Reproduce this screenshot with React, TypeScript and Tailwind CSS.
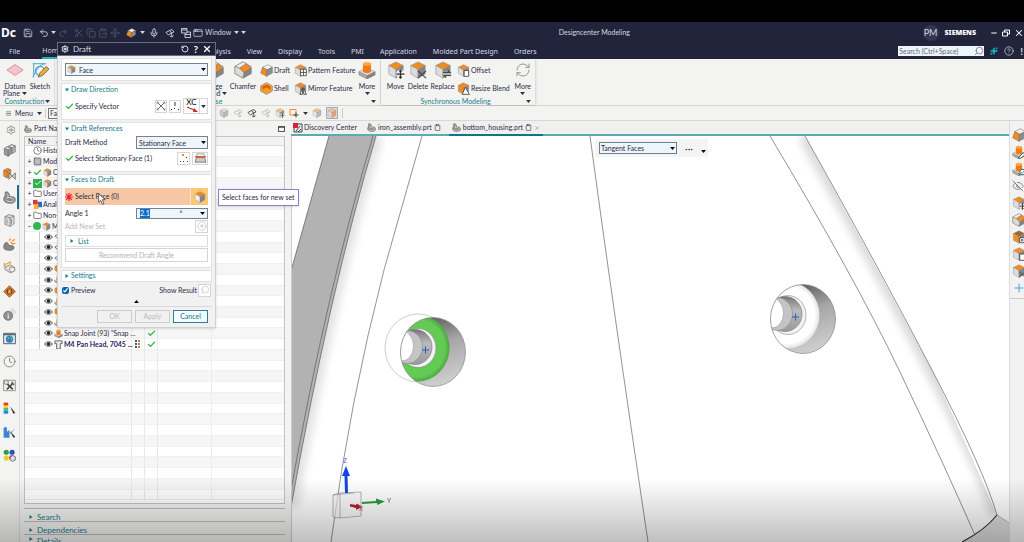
import React from "react";
import {
  Settings, Save, Undo2, Redo2, Scissors, Copy, ClipboardPaste, Move, Mic, AppWindow,
  Clock, Search, Minus, X, CircleHelp, Sparkles, EyeOff, Folder, Check,
  RotateCcw, Plus, RefreshCw, Square, Clipboard, CirclePlus,
} from "lucide-react";

type P = { className?: string };
type CubeProps = P & { top?: string; left?: string; right?: string; badge?: string };

const OR = "#f58a1f";
const GL = "#dcdcdc";
const GD = "#858585";

function Badge({ kind }: { kind?: string }) {
  if (!kind) return null;
  return (
    <g stroke="#444" strokeWidth="1.3" fill="none">
      {kind === "move" && <><circle cx="15" cy="14.500" r="5" fill="#fff" fillOpacity=".8" stroke="none" /><path d="M15 10v9M10.500 14.500h9M13.500 11.500l1.500-1.500 1.500 1.500M13.500 17.500l1.500 1.500 1.500-1.500" stroke="#333" /></>}
      {kind === "delete" && <path d="M10 11l9 8M19 11l-9 8" />}
      {kind === "replace" && <><path d="M10 12h9v5h-9z" fill="#ddd" stroke="none" /><path d="M10 13h8l-2.500-2.500M19 16h-8l2.500 2.500" /></>}
      {kind === "page" && <path d="M11 10h7v9h-7z" fill="#fff" />}
      {kind === "grid" && <path d="M10 8h9v10h-9zM14.500 8v10M10 13h9" fill="#fff" />}
      {kind === "mirror" && <path d="M9 19l4-10v10zM15 19v-10l4 10z" fill="#fff" />}
      {kind === "blend" && <path d="M8 19l5-11 6 11z" fill="#fff" />}
      {kind === "gear" && <><circle cx="14.500" cy="14.500" r="4" fill="#fff" /><circle cx="14.500" cy="14.500" r="1.300" /></>}
      {kind === "tick" && <><circle cx="15" cy="14.500" r="4" fill="#fff" /><path d="M13 14.500l1.500 2 3-4" stroke="#2a9" /></>}
      {kind === "pen" && <path d="M9 18l7-7 3 3-7 5z" fill="#fff" />}
    </g>
  );
}

function Cube({ className, top = OR, left = GL, right = GD, badge }: CubeProps) {
  return (
    <svg viewBox="0 0 20 20" className={className} aria-hidden="true">
      <g stroke="#888" strokeWidth=".6" strokeLinejoin="round">
        <path d="M10 1l8 4-8 4.500L2 5z" fill={top} />
        <path d="M2 5l8 4.500V19l-8-4.500z" fill={left} />
        <path d="M18 5l-8 4.500V19l8-4.500z" fill={right} />
      </g>
      <Badge kind={badge} />
    </svg>
  );
}

function ChamferIcon({ className }: P) {
  return (
    <svg viewBox="0 0 20 20" className={className} aria-hidden="true">
      <g stroke="#777" strokeWidth=".6" strokeLinejoin="round">
        <path d="M1 6l9-5 9 5v8l-9 5-9-5z" fill="#c9c9c9" />
        <path d="M1 6l9-5 4 2-8 5z" fill="#eee" />
        <path d="M6 8l8-5 5 5-8 5z" fill={OR} />
        <path d="M11 13l8-5v6l-9 5z" fill={GD} />
        <path d="M6 8l5 5-1 6-9-5V6z" fill="#dadada" />
      </g>
    </svg>
  );
}

function DraftIcon({ className }: P) {
  return (
    <svg viewBox="0 0 20 20" className={className} aria-hidden="true">
      <g stroke="#666" strokeWidth=".7" strokeLinejoin="round">
        <path d="M4 5l8-4 7 4-8 4z" fill="#f1f1f1" />
        <path d="M4 5l7 4-1 10-9-5z" fill={OR} />
        <path d="M19 5l-8 4-1 10 9-5z" fill="#8d8d8d" />
      </g>
    </svg>
  );
}

function ShellIcon({ className }: P) {
  return (
    <svg viewBox="0 0 20 20" className={className} aria-hidden="true">
      <path d="M1 6l9-5 9 5v8l-9 5-9-5z" fill="#f9a13a" stroke="#7a5a3a" strokeWidth=".8" />
      <path d="M4 7l6-3 6 3v5l-6 3-6-3z" fill="#c9650a" />
      <path d="M4 12l6-4 6 4-6 3z" fill="#ff9a2e" />
    </svg>
  );
}

function ExtrudeIcon({ className, badge }: P & { badge?: string }) {
  return (
    <svg viewBox="0 0 20 20" className={className} aria-hidden="true">
      <g stroke="#777" strokeWidth=".5" strokeLinejoin="round">
        <path d="M1 12l9-4.500 9 4.500-9 4.500z" fill="#ddd" />
        <path d="M1 12l9 4.500V20l-9-4.500z" fill="#aaa" />
        <path d="M19 12l-9 4.500V20l9-4.500z" fill="#808080" />
      </g>
      <path d="M5.500 3v8.500c0 2.700 9 2.700 9 0V3z" fill="#ee7c12" />
      <ellipse cx="10" cy="3.200" rx="4.500" ry="2.200" fill="#ffa64a" />
      <Badge kind={badge} />
    </svg>
  );
}

function PartIcon({ className }: P) {
  return (
    <svg viewBox="0 0 20 20" className={className} aria-hidden="true">
      <path d="M3 2c3-2 6 0 7 4l1 3c4-1 8 0 8 4 0 5-4 6-8 6-6 0-10-3-10-6 0-4 4-6 2-11z" fill="#8b8b8b" stroke="#555" strokeWidth=".8" />
      <path d="M5 11c3-2 9-1 12 2M4 14c3 3 9 3 13 1M6 4c2 2 2 4 1 6" fill="none" stroke="#e9e9e9" strokeWidth="1.200" />
    </svg>
  );
}

function EyeIcon() {
  return (
    <svg viewBox="0 0 18 12" className="h-[6px] w-[9px] shrink-0" aria-hidden="true">
      <path d="M1 6c4-6 12-6 16 0-4 6-12 6-16 0z" fill="#ddd" stroke="#333" strokeWidth="1.500" />
      <circle cx="9" cy="6" r="3.500" fill="#222" />
    </svg>
  );
}

function Caret({ className = "" }: P) {
  return (
    <svg viewBox="0 0 8 5" className={"h-[3px] w-[5px] shrink-0 " + className} aria-hidden="true">
      <path d="M0 0h8L4 5z" fill="currentColor" />
    </svg>
  );
}

function Tri({ open }: { open?: boolean }) {
  return (
    <svg viewBox="0 0 8 8" className="size-1 shrink-0" aria-hidden="true">
      <path d={open ? "M0 1h8L4 7z" : "M1 0v8l6-4z"} fill="#157a8c" />
    </svg>
  );
}

function GreenCheck({ className = "size-[9px]" }: P) {
  return <Check className={className + " shrink-0 text-[#2fb84a]"} strokeWidth={3.5} />;
}

function Csys({ className }: P) {
  return (
    <svg viewBox="0 0 20 20" className={className} aria-hidden="true" fill="none" stroke="currentColor" strokeWidth="1.800">
      <path d="M2 9l7-4 4 5-6 4zM9 5l5-2 4 5-5 2M13 10l1 7M10 16l4 2 3-3" />
    </svg>
  );
}

function TitleBar() {
  const ic = "size-2.5 shrink-0";
  return (
    <div className="flex h-[21px] shrink-0 items-center pl-px text-[#d8d9e2]">
      <strong className="w-[22px] font-['Noto_Sans',sans-serif] text-[12px] leading-3 text-white">Dc</strong>
      <div className="flex items-center gap-0.5">
        <button aria-label="Save"><Save className={ic} strokeWidth={1.7} /></button>
        <button aria-label="Undo" className="ml-1 flex items-center gap-0.5"><Undo2 className={ic} /><Caret /></button>
        <div className="flex items-center gap-0.5 text-[#50546c]">
          <button aria-label="Redo"><Redo2 className={ic} /></button>
          <button aria-label="Cut" className="ml-1"><Scissors className={ic} /></button>
          <button aria-label="Copy"><Copy className={ic} /></button>
          <button aria-label="Paste"><ClipboardPaste className={ic} /></button>
          <button aria-label="Transform"><Move className={ic} /></button>
        </div>
        <button aria-label="Shading" className="ml-1 flex items-center gap-1"><DraftIcon className={ic} /><Caret /></button>
        <button aria-label="Voice" className="ml-0.5"><Mic className={ic} /></button>
        <button aria-label="Touch" className="ml-1"><Csys className={ic} /></button>
        <button aria-label="Switch window" className="ml-1">
          <svg viewBox="0 0 20 20" className={ic} fill="none" stroke="currentColor" strokeWidth="1.800"><path d="M1 1h11v9H1zM1 4h11M8 10v9h11V8h-7M8 13h11" /></svg>
        </button>
        <button className="flex items-center gap-0.5"><AppWindow className={ic} strokeWidth={1.7} />Window<Caret className="ml-px" /></button>
        <button aria-label="Customize"><Caret /></button>
      </div>
      <div className="flex-1 pl-5 text-center">Designcenter Modeling</div>
      <span className="mr-1.5 flex size-4 items-center justify-center rounded-full bg-[#34374f] text-[9px] leading-3">PM</span>
      <strong className="font-['Noto_Sans',sans-serif] text-[7px] font-black leading-3 text-white">SIEMENS</strong>
      <div className="ml-3.5 flex items-center gap-1 text-white">
        <button aria-label="Minimize"><Minus className="size-2" strokeWidth={3} /></button>
        <button aria-label="Restore">
          <svg viewBox="0 0 16 16" className="size-2" fill="none" stroke="currentColor" strokeWidth="2"><path d="M1 6h10v8H1zM5 6V2h10v8h-4" /></svg>
        </button>
        <button aria-label="Close"><X className="size-2.5" strokeWidth={2.5} /></button>
      </div>
    </div>
  );
}

function MenuTabs() {
  return (
    <div className="flex h-4 shrink-0 items-stretch text-[#d8d9e2]">
      <nav className="flex flex-1 items-stretch gap-4 pl-[9px] font-['Noto_Sans',sans-serif]">
        <a href="#file" className="mr-1.5 flex items-center">File</a>
        <a href="#home" className="flex items-center border-b-2 border-[#18b8b8]">Home</a>
        <a href="#analysis" className="ml-[126px] flex items-center">Analysis</a>
        {["View", "Display", "Tools", "PMI", "Application", "Molded Part Design", "Orders"].map((t) => (
          <a key={t} href="#tab" className="flex items-center">{t}</a>
        ))}
      </nav>
      <div className="flex items-center">
        <label className="flex h-[10px] w-[86px] items-center bg-[#eef5fb] text-[#555]">
          <input aria-label="Search commands" placeholder="Search (Ctrl+Space)" className="w-full min-w-0 bg-transparent pl-px text-[7px] leading-[9px] outline-none placeholder:text-[#667]" />
          <Search className="size-2.5 shrink-0 -scale-x-100" strokeWidth={1.5} />
        </label>
        <Sparkles className="ml-1.5 size-2 fill-[#17b3b8] text-[#17b3b8]" />
        <CircleHelp className="ml-1.5 size-2.5" strokeWidth={1.7} />
        <b className="ml-1.5 pr-px text-[10px] leading-3">!</b>
      </div>
    </div>
  );
}

function Big({ icon, children, w, caret }: { icon: React.ReactNode; children: React.ReactNode; w: string; caret?: boolean }) {
  return (
    <button className={"flex shrink-0 flex-col items-center leading-[7px] " + w}>
      <span className="mb-1 flex h-[18px] items-center">{icon}</span>
      {children}
      {caret && <Caret className="mt-0.5" />}
    </button>
  );
}

function Small({ icon, children }: { icon: React.ReactNode; children: React.ReactNode }) {
  return <button className="flex h-[18px] items-center gap-px">{icon}{children}</button>;
}

function GroupFoot({ label }: { label: string }) {
  return (
    <div className="flex h-[9px] items-center px-1 text-[#17808c]">
      <span className="flex-1 text-center">{label}</span>
      <Caret className="text-[#333]" />
    </div>
  );
}

function Ribbon() {
  const big = "size-[18px]";
  const sm = "size-[13px] shrink-0";
  return (
    <div className="flex h-[47px] shrink-0 border-b border-[#d4d4d4] bg-[#f3f3f1] text-[#2b2b45]">
      <section className="flex w-[55px] shrink-0 flex-col justify-between border-r border-[#ddd]">
        <div className="flex pl-0.5 pt-0.5">
          <Big w="w-[26px]" icon={<svg viewBox="0 0 20 14" className="h-3.5 w-[18px]"><path d="M1 7l9-6 9 6-9 6z" fill="#f5c3cb" stroke="#d58b98" /></svg>}>
            <span className="flex flex-col items-center"><span>Datum</span><span className="flex items-center gap-0.5">Plane<Caret /></span></span>
          </Big>
          <Big w="w-6" icon={<svg viewBox="0 0 20 20" className={big} fill="none"><path d="M2 3h13M3 3v15M2 18C8 5 12 3 17 3" stroke="#3ba0c8" /><circle cx="10" cy="11" r="5" stroke="#3ba0c8" strokeWidth="1.500" /><path d="M8 18l2-5 7-7 3 3-7 7z" fill="#f2a63b" stroke="#555" strokeWidth=".8" /></svg>}>Sketch</Big>
        </div>
        <GroupFoot label="Construction" />
      </section>
      <section className="flex w-[326px] shrink-0 flex-col justify-between border-r border-[#ddd]">
        <div className="flex justify-end pt-0.5">
          <Big w="w-7" icon={<ChamferIcon className={big} />}>
            <span className="flex flex-col items-center"><span>Edge</span><span className="flex items-center gap-0.5">Blend<Caret /></span></span>
          </Big>
          <Big w="w-7" icon={<ChamferIcon className={big} />}>Chamfer</Big>
          <div className="ml-[3px] w-[34px]">
            <Small icon={<DraftIcon className={sm} />}>Draft</Small>
            <Small icon={<ShellIcon className={sm} />}>Shell</Small>
          </div>
          <div className="w-[60px] whitespace-nowrap">
            <Small icon={<Cube className={sm} badge="grid" />}>Pattern Feature</Small>
            <Small icon={<Cube className={sm} badge="mirror" />}>Mirror Feature</Small>
          </div>
          <Big w="w-[26px]" caret icon={<ExtrudeIcon className={big} />}>More</Big>
        </div>
        <GroupFoot label="Base" />
      </section>
      <section className="flex w-[155px] shrink-0 flex-col justify-between border-r border-[#ddd] shadow-sm">
        <div className="flex pl-[3px] pt-0.5">
          <Big w="w-[23px]" icon={<Cube className={big} badge="move" />}>Move</Big>
          <Big w="w-[22px]" icon={<Cube className={big} badge="delete" />}>Delete</Big>
          <Big w="w-[27px]" icon={<Cube className={big} badge="replace" />}>Replace</Big>
          <div className="w-[54px] whitespace-nowrap pl-px">
            <Small icon={<Cube className={sm} badge="page" />}>Offset</Small>
            <Small icon={<Cube className={sm} badge="blend" left={OR} />}>Resize Blend</Small>
          </div>
          <Big w="w-[26px]" caret icon={<RefreshCw className="size-4 text-[#888]" strokeWidth={1.3} />}>More</Big>
        </div>
        <GroupFoot label="Synchronous Modeling" />
      </section>
    </div>
  );
}

function Toolbar() {
  return (
    <div className="flex h-[15px] shrink-0 items-center border-b border-[#d8d8d8] bg-[#f3f3f1] text-[#2b2b45]">
      <button className="flex w-[46px] items-center gap-1 border-r border-[#ccc] pl-1.5">
        <svg viewBox="0 0 6 6" className="size-[5px]" stroke="#555"><path d="M0 1h6M0 3h6M0 5h6" strokeWidth=".7" /></svg>
        <span>Menu</span><Caret />
      </button>
      <select aria-label="Selection filter" className="ml-0.5 h-[11px] w-[120px] appearance-none border border-[#777] bg-[#f4f8fb] px-px text-[7px] leading-[9px]">
        <option>Face</option>
      </select>
      <div className="ml-[51px] flex items-center gap-1 text-[#bbb]">
        <Cube className="size-2.5" top="#ddd" left="#ccc" right="#bbb" />
        <Csys className="size-2.5" /><Csys className="size-2.5 text-[#444]" /><Csys className="size-2.5" />
        <Cube className="size-2.5" top="#f6c183" left="#f3e5d5" badge="move" />
        <svg viewBox="0 0 20 20" className="size-2.5" fill="none"><path d="M2 3h12v11H2z" stroke={OR} strokeWidth="2" /><path d="M14 9v10M9 14h10" stroke="#444" strokeWidth="2" /></svg>
        <Caret className="text-[#333]" />
        <Cube className="size-2.5" top="#f6c183" left="#e8e8e8" right="#bbb" />
        <span className="flex size-3 items-center justify-center border border-[#aaa] bg-[#ddd]"><Cube className="size-2.5" top="#f0c0a8" left="#ddd" right="#f0a070" /></span>
        <span className="h-2.5 w-px bg-[#ccc]" />
      </div>
    </div>
  );
}

function LeftRail() {
  const s = "size-[13px]";
  const items: [string, React.ReactNode][] = [
    ["Options", <Settings className="size-2.5 text-[#777]" strokeWidth={1.8} />],
    ["Assembly Navigator", <svg viewBox="0 0 20 20" className={s}><g stroke="#555" strokeWidth=".8"><path d="M2 7l5-3 6 2v9l-5 4-6-3z" fill="#999" /><path d="M8 4l5-3 6 2v9l-5 3V6z" fill="#b5b5b5" /><path d="M2 7l6 2 5-3-6-2zM8 4l6 2 5-3-6-2z" fill="#ddd" /><path d="M8 9v10" /></g></svg>],
    ["Constraint Navigator", <svg viewBox="0 0 20 20" className={s}><path d="M1 5l6-3 5 2v9l-6 4-5-3z" fill={OR} stroke="#666" strokeWidth=".8" /><path d="M1 5l5 2v10M6 7l6-3" stroke="#666" fill="none" strokeWidth=".8" /><path d="M9 9l5 5-5 5zM19 9l-5 5 5 5z" fill="#ccc" stroke="#555" /></svg>],
    ["Part Navigator", <PartIcon className={s} />],
    ["Reuse Library", <svg viewBox="0 0 20 20" className={s}><g stroke="#666" strokeWidth="1"><path d="M3 4l6-3 8 2v12l-6 4-8-3z" fill="#ddd" /><path d="M3 4l8 2 6-3M11 6v13" fill="none" /><path d="M6 8v7M13 8v7" /></g></svg>],
    ["Part Families", <svg viewBox="0 0 20 20" className={s}><path d="M2 9c3-3 5-3 6 0l2 3c4-1 7 0 7 3s-4 4-8 4-8-2-8-4z" fill="#888" stroke="#555" /><path d="M9 4l3-3M14 5l4-3M15 9l4-1M11 6l5 4" stroke={OR} strokeWidth="1.800" /></svg>],
    ["Measure", <svg viewBox="0 0 20 20" className={s}><path d="M3 9l8-3 7 4v5l-7 3-8-5z" fill="#ddd" stroke="#666" /><circle cx="14" cy="13" r="4" fill="#eee" stroke="#666" /><path d="M2 6l9-4M2 3v6M11 0v5" stroke={OR} strokeWidth="1.500" /></svg>],
    ["Check", <svg viewBox="0 0 20 20" className={s}><path d="M10 1l9 9-9 9-9-9z" fill="#e8741a" stroke="#6b4a32" strokeWidth="1" /><circle cx="10" cy="10" r="4.500" fill="#6b4a32" /><path d="M8 7h4v6H8z" fill="#f6a550" /></svg>],
    ["Notifications", <svg viewBox="0 0 20 20" className={s}><circle cx="8" cy="12" r="7" fill="#8f8f8f" stroke="#666" /><path d="M8 8v2M8 11v5" stroke="#eee" strokeWidth="2" /><path d="M11 3c3 0 5 2 6 6M12 1c4 0 7 3 7 7" stroke="#bbb" fill="none" /></svg>],
    ["Browser", <svg viewBox="0 0 20 20" className={s}><path d="M1 2h18v16H1z" fill="#dceaf5" stroke="#57636e" strokeWidth="1.500" /><path d="M1 4h18" stroke="#57636e" strokeWidth="2" /><circle cx="10" cy="11" r="5.500" fill="#2a7db8" /><path d="M7 8c3 0 2 3 0 4M11 7c3 2 3 4 1 6" stroke="#8fd0a0" strokeWidth="1.500" fill="none" /></svg>],
    ["History", <Clock className={s + " text-[#777]"} strokeWidth={1.5} />],
    ["Process Studio", <svg viewBox="0 0 20 20" className={s} fill="none" stroke="#666"><path d="M1 2h18v16H1z" /><path d="M5 6l10 10M15 7L6 16" stroke="#444" strokeWidth="2.500" /><circle cx="5" cy="5" r="3.500" fill="#ddd" /><path d="M13 5l4 4" strokeWidth="3" /></svg>],
    ["Visual Reports", <svg viewBox="0 0 20 20" className={s}><path d="M1 1h7v5H1z" fill="#e33" /><path d="M1 5h7v4H1z" fill="#fc3" /><path d="M1 9h7v4H1z" fill="#3c6" /><path d="M1 13h7v5H1z" fill="#28d" /><path d="M11 7l8 10-3 1z" fill="#333" /></svg>],
    ["Mold Analysis", <svg viewBox="0 0 20 20" className={s}><path d="M1 3c2-2 4-2 5 0v6l4-3v12H1z" fill="#3d86cf" /><path d="M19 4l-8 6v3z" fill="#6aa8e0" /><path d="M11 8l8 9-3 1z" fill="#333" /></svg>],
    ["System Materials", <svg viewBox="0 0 20 20" className={s}><circle cx="5" cy="5" r="4" fill="#2f9e4b" /><circle cx="14" cy="5" r="4" fill="#2d50c8" /><circle cx="5" cy="14" r="4" fill="#e8d01e" /><circle cx="13" cy="13" r="3.500" fill="#d33" /><path d="M11 12l4-2 4 2v5l-4 2-4-2z" fill="#ddd" stroke="#444" /></svg>],
  ];
  return (
    <aside className="flex w-5 shrink-0 flex-col border-r border-[#ddd] bg-[#f3f3f1]">
      {items.map(([name, icon], i) => (
        <button key={name} aria-label={name} className={"flex shrink-0 items-center justify-end border-r-2 pr-px " + (i === 0 ? "h-[17px] " : i % 2 ? "h-6 " : "h-[23px] ") + (i === 3 ? "border-[#1f6f8b]" : "border-transparent")}>
          {icon}
        </button>
      ))}
    </aside>
  );
}

type Row = { icon: React.ReactNode; text: string; exp?: string; level?: number; bold?: boolean; ok?: boolean };

function PartNavigator() {
  const s = "size-[9px] shrink-0";
  const features = Array.from({ length: 9 }, (_, i): Row => ({
    level: 1,
    icon: i < 3 ? <Csys className={s + " text-[#357]"} /> : i % 2 ? <Cube className={s} left={OR} /> : <ExtrudeIcon className={s} />,
    text: "",
  }));
  const rows: Row[] = [
    { icon: <Clock className={s + " text-[#555]"} />, text: "History Mode" },
    { icon: <Square className={s + " fill-[#bbb] text-[#555]"} />, text: "Model Views", exp: "+" },
    { icon: <><GreenCheck /><Cube className={s} /></>, text: "Cameras", exp: "+" },
    { icon: <><span className="flex size-[9px] items-center justify-center bg-[#31b04b]"><Check className="size-2 text-white" strokeWidth={3} /></span><Cube className={s} /></>, text: "Controls", exp: "+" },
    { icon: <Folder className={s + " text-[#555]"} />, text: "User Expressions", exp: "+" },
    { icon: <svg viewBox="0 0 10 10" className={s}><path d="M0 0h5v5H0z" fill="#d33" /><path d="M5 2h5v6H5z" fill="#36c" /><path d="M1 5h5v5H1z" fill="#f5b31e" /></svg>, text: "Analysis", exp: "+" },
    { icon: <Folder className={s + " text-[#555]"} />, text: "Non-timestamp", exp: "+" },
    { icon: <><span className="size-2 rounded-full bg-[#35b552]" /><Cube className={s} /></>, text: "Model History", exp: "−" },
    ...features,
    { level: 1, icon: <ExtrudeIcon className={s} />, text: 'Snap Joint (93) "Snap ...', ok: true },
    { level: 1, icon: <svg viewBox="0 0 10 10" className={s}><path d="M1 1h8v3H7v6H3V4H1z" fill="#eee" stroke="#555" /></svg>, text: "M4 Pan Head, 7045 ...", ok: true, bold: true },
  ];
  const blanks = Array.from({ length: 33 - rows.length }, () => null);
  return (
    <section className="flex w-[271px] shrink-0 flex-col bg-[#f3f3f1] text-[#2b2b45]">
      <div className="flex h-[15px] shrink-0 items-center gap-0.5 pl-1 pr-1.5">
        <PartIcon className="size-2" /><h2 className="flex-1">Part Navigator</h2>
        <svg viewBox="0 0 8 7" className="h-[6px] w-[7px]"><path d="M.5.5h7v6h-7zM0 1.500h8" fill="none" stroke="#333" /></svg>
      </div>
      <div className="ml-1 mr-1.5 flex min-h-0 flex-1 flex-col border border-[#c4c4c4] bg-white pb-[3px]">
        <div className="flex h-[9px] shrink-0 items-center gap-2.5 border-b border-[#ddd] bg-[#f2f2f2] pl-[3px] leading-[8px]">Name <Caret className="rotate-180" /></div>
        <div className="flex min-h-0 flex-1 flex-col">
          {[...rows, ...blanks].map((r, i) => (
            <div key={i} className={"flex min-h-0 flex-1 items-stretch border-b border-[#f0f0f0] leading-[9px] " + (i % 2 ? "bg-[#f6f6f6]" : "bg-white")}>
              <div className="flex w-[107px] items-center gap-px whitespace-nowrap border-r border-[#e8e8e8] pl-[2px]">
                {r && (r.level ? (
                  <><span className="ml-3 h-full w-1 shrink-0 border-l border-[#ccc]" /><EyeIcon />{r.icon}</>
                ) : (
                  <><span className="flex size-[5px] items-center justify-center text-[7px] leading-[5px]">{r.exp}</span>{r.icon}</>
                ))}
                {r && <span className={r.bold ? "font-bold text-[#2a1a60]" : ""}>{r.text}</span>}
              </div>
              <div className="flex w-[13px] items-center justify-center border-r border-[#e8e8e8]">
                {r?.bold && <svg viewBox="0 0 6 8" className="h-2 w-1.5"><path d="M0 0h2v2H0zM0 3h2v2H0zM0 6h2v2H0z" fill="#555" /><path d="M3 0h2v2H3zM3 3h2v2H3zM3 6h2v2H3z" fill="#b97a5a" /></svg>}
              </div>
              <div className="flex w-[13px] items-center justify-center border-r border-[#e8e8e8]">{r?.ok && <GreenCheck />}</div>
              <div className="w-[54px] border-r border-[#ececec]" />
            </div>
          ))}
        </div>
      </div>
      <div className="ml-1 mr-1.5 mt-1 shrink-0 border-t border-[#bbb] text-[#157a8c]">
        {["Search", "Dependencies"].map((t) => (
          <button key={t} className="flex h-[13px] w-full items-center gap-1 border-b border-[#bbb] pl-[5px] pt-1 text-[8px] leading-[8px]"><Tri />{t}</button>
        ))}
        <button className="flex h-[7px] w-full items-start gap-1 overflow-hidden pl-[5px] pt-0.5 text-[8px] leading-[9px]"><Tri />Details</button>
      </div>
    </section>
  );
}

function DocTabs() {
  return (
    <div className="flex h-[15px] shrink-0 items-stretch gap-2.5 border-b-2 border-[#5fa9b5] bg-[#f0f0ee] pl-0.5 text-[#2b2b45]">
      <a href="#dc" className="flex items-center gap-px">
        <svg viewBox="0 0 10 10" className="size-2.5"><path d="M1 1h8v8H1z" fill="#eee" stroke="#444" /><path d="M0 0h5v5H0z" fill="#d5203a" /><path d="M3 8l4-5M5 9l3-3" stroke="#444" /></svg>
        Discovery Center
      </a>
      <a href="#iron" className="flex items-center gap-0.5"><PartIcon className="size-[9px]" />iron_assembly.prt<Clipboard className="size-[7px]" /></a>
      <a href="#bottom" className="-mb-[2px] -ml-0.5 flex items-center gap-0.5 border-b-2 border-[#0d7687] px-[3px]"><PartIcon className="size-[9px]" />bottom_housing.prt<Clipboard className="size-[7px]" /><X className="size-[6px] text-[#888]" /></a>
    </div>
  );
}

function Boss({ green }: { green?: boolean }) {
  const id = green ? "g" : "w";
  return (
    <g>
      <defs>
        <clipPath id={"clip" + id}><ellipse cx="433" cy="352" rx="32.500" ry="34.500" /></clipPath>
        <linearGradient id={"out" + id} x1="0.400" y1="0" x2="0.700" y2="1"><stop offset="0" stopColor="#5c5c5c" /><stop offset=".4" stopColor="#a6a6a6" /><stop offset="1" stopColor="#d2d2d2" /></linearGradient>
        <radialGradient id={"lobe" + id}><stop offset=".85" stopColor={green ? "#63cb55" : "#fff"} /><stop offset="1" stopColor={green ? "#4aa842" : "#e2e2e2"} /></radialGradient>
        <linearGradient id={"in" + id} x1="0" y1="0" x2="0" y2="1"><stop offset="0" stopColor="#777" /><stop offset=".4" stopColor="#bbb" /><stop offset="1" stopColor="#9a9a9a" /></linearGradient>
      </defs>
      {green && <ellipse cx="418" cy="348" rx="33" ry="34" fill="#fff" stroke="#b4bfae" strokeWidth=".7" />}
      <ellipse cx="433" cy="352" rx="32.500" ry="34.500" fill={"url(#out" + id + ")"} />
      <g clipPath={"url(#clip" + id + ")"}>
        <ellipse cx="417" cy="348" rx="32.500" ry="33.500" fill={"url(#lobe" + id + ")"} />
        <ellipse cx="418" cy="348" rx="18" ry="19.500" fill="#f2f2f2" stroke="#888" strokeWidth=".6" />
        <ellipse cx="415" cy="347" rx="17" ry="17.500" fill={"url(#in" + id + ")"} stroke="#777" strokeWidth=".6" />
        <ellipse cx="407" cy="347" rx="15.500" ry="16.500" fill="#c4c4c4" stroke="#888" strokeWidth=".6" />
        <ellipse cx="402" cy="346" rx="11.500" ry="15" fill="#fff" stroke="#888" strokeWidth=".5" />
      </g>
      <ellipse cx="433" cy="352" rx="32.500" ry="34.500" fill="none" stroke="#888" strokeWidth=".7" />
      <path d="M422 350h7M425.500 346.500v7" stroke="#3557c0" strokeWidth="1" />
    </g>
  );
}

function Viewport() {
  return (
    <div className="relative min-h-0 flex-1 overflow-hidden border-l border-[#ccc] bg-white">
      <svg viewBox="292 136 717 406" preserveAspectRatio="xMinYMin slice" className="h-full w-full" role="img" aria-label="Part model">
        <defs>
          <filter id="soft"><feGaussianBlur stdDeviation="4" /></filter>
          <clipPath id="inner"><path d="M770 136Q855 278 899 370T978 542L997 515Q940 385 932 370T805 136z" /></clipPath>
        </defs>
        <path d="M376 136Q330 290 291 507" fill="none" stroke="#e2e2e2" strokeWidth="14" filter="url(#soft)" />
        <path d="M329 136L291 271V507Q330 290 376 136z" fill="#b2b2b2" />
        <path d="M329 136L291 271M373 136Q327 290 291 490M376 136Q330 290 291 507" fill="none" stroke="#666" strokeWidth=".8" />
        <path d="M422 136L384 270Q350 400 331 542M590 136Q612 300 648 542" fill="none" stroke="#777" strokeWidth=".8" />
        <path d="M805 136Q880 270 932 370T997 515" fill="none" stroke="#dadada" strokeWidth="14" filter="url(#soft)" clipPath="url(#inner)" />
        <path d="M770 136Q855 278 899 370T978 542M805 136Q880 270 932 370T997 515L1009 523" fill="none" stroke="#777" strokeWidth=".8" />
        <path d="M997 515Q985 530 962 542h47v-19z" fill="#dcdcdc" />
        <path d="M997 515Q985 530 962 542" fill="none" stroke="#333" strokeWidth="1.200" />
        <Boss green />
        <g transform="translate(370 -33)"><Boss /></g>
        <g>
          <path d="M333 495l7-2 21-1v24l-21 2-7-1zM340 493v25M333 495l21-2" fill="#f6f6f6" fillOpacity=".6" stroke="#999" strokeWidth=".7" />
          <path d="M345 493l-.5-17h-2.500l4-10 4 10H347.500l.5 17z" fill="#1446e6" />
          <path d="M362 502l14-1v-2.500l9 3-8 3.500v-2l-15 1z" fill="#2f9a3d" />
          <path d="M350 504l6 1 1-1.500 5 3.500-6 3v-2l-6-1.500z" fill="#b3222c" />
          <g fontFamily="Noto Sans, sans-serif" fontSize="7">
            <text x="343" y="463" fill="#5a5ae0">Z</text><text x="387" y="503" fill="#666">Y</text><text x="359" y="511" fill="#d04050">X</text>
          </g>
        </g>
      </svg>
      <div className="absolute left-[303px] top-[3px] flex h-[18px] w-[113px] items-center bg-[#f4f4f4] pl-1 text-[#2b2b45]">
        <div className="relative">
          <select aria-label="Face rule" className="block h-3 w-[78px] appearance-none border border-[#6d7f8d] bg-[#eef5fb] px-px text-[7px] leading-[10px]"><option>Tangent Faces</option></select>
          <Caret className="pointer-events-none absolute right-0.5 top-[5px] text-black" />
        </div>
        <span className="flex-1 text-center text-[10px] leading-3">···</span>
        <Caret className="mr-0.5 mt-1.5 text-black" />
      </div>
    </div>
  );
}

function RightRail() {
  const s = "size-[14px] shrink-0";
  const icons = [
    <DraftIcon className={s} />, <ExtrudeIcon className={s} badge="pen" />, <ExtrudeIcon className={s} badge="tick" />,
    <EyeOff className="size-3 shrink-0 text-[#666]" strokeWidth={1.5} />, <Cube className={s} badge="move" />, <ChamferIcon className={s} />,
    <Cube className={s} top="#a8612a" left={OR} badge="gear" />, <Cube className={s} badge="page" />, <Cube className={s} badge="delete" />,
    <Plus className={s + " text-[#2f9fd0]"} strokeWidth={1.5} />,
  ];
  return (
    <aside className="flex w-[15px] shrink-0 flex-col overflow-hidden border-l border-[#ddd] bg-[#f2f2f2] pt-[5px]">
      {icons.map((ic, i) => <button key={i} aria-label={"Tool " + (i + 1)} className="flex h-[17px] shrink-0 items-center pl-[2px]">{ic}</button>)}
      <hr className="mt-0.5 border-[#ccc]" />
    </aside>
  );
}

function Head({ children, open = true }: { children: React.ReactNode; open?: boolean }) {
  return <h3 className="flex h-[9px] items-center gap-0.5 text-[#157a8c]"><Tri open={open} />{children}</h3>;
}

function Box({ children, className = "" }: { children: React.ReactNode; className?: string }) {
  return <span className={"flex h-[13px] items-center justify-center border border-[#d5d5d5] bg-white " + className}>{children}</span>;
}

function DraftDialog() {
  const card = "border border-[#e2e2e2] bg-white px-[3px] ";
  const sel = "block h-[13px] w-full appearance-none border border-[#74828e] bg-[#eef5fb] text-[7px] leading-[10px] ";
  return (
    <div role="dialog" aria-label="Draft" className="absolute left-[57px] top-[42px] flex w-[159px] flex-col border border-[#d0d0d0] bg-[#f1f1f1] text-[#2b2b45] shadow">
      <header className="-mx-px -mt-px flex h-[14px] items-center border border-[#6b6e80] bg-[#1f2238] pl-[3px] pr-[3px] text-[#d8d9e2]">
        <Settings className="size-2 text-white" strokeWidth={3} />
        <h2 className="ml-1 flex-1 text-[8px] leading-[9px]">Draft</h2>
        <button aria-label="Reset"><RotateCcw className="size-2" strokeWidth={3} /></button>
        <b className="mx-1 text-[10px] leading-3 text-white">?</b>
        <button aria-label="Close"><X className="size-2.5 text-white" strokeWidth={3} /></button>
      </header>
      <div className="flex flex-col gap-0.5 px-[3px] pt-0.5">
        <div className={card + "py-1"}>
          <div className="relative">
            <select aria-label="Draft type" className={sel + "pl-[13px]"}><option>Face</option></select>
            <Cube className="pointer-events-none absolute left-0.5 top-0.5 size-[9px]" />
            <Caret className="pointer-events-none absolute right-0.5 top-[5px] text-black" />
          </div>
        </div>
        <section className={card + "h-[37px] pt-[1px]"}>
          <Head>Draw Direction</Head>
          <div className="mt-1 flex h-4 items-center">
            <GreenCheck /><span className="ml-px flex-1">Specify Vector</span>
            <Box className="w-3"><svg viewBox="0 0 10 10" className="size-2.5"><path d="M1 1l8 8M9 1L1 9" stroke="#666" /><path d="M1 1h2M1 1v2M9 1H7M9 1v2M1 9h2M1 9V7M9 9H7M9 9V7" stroke="#666" strokeWidth=".5" /></svg></Box>
            <Box className="ml-0.5 w-3"><svg viewBox="0 0 10 10" className="size-2.5"><path d="M5 1v4" stroke="#333" /><path d="M4 7h1v1H4zM1 8h1v1H1zM8 8h1v1H8z" fill="#333" /></svg></Box>
            <button aria-label="X axis" className="ml-0.5 flex h-4 w-[17px] flex-col items-center border border-[#d5d5d5] text-[8px] leading-[7px] text-black">XC
              <svg viewBox="0 0 12 6" className="h-1.5 w-3"><path d="M1 1l7 3" stroke="#a33" strokeWidth="1.300" /><path d="M8 2l4 4H7z" fill="#d22" /></svg>
            </button>
            <span className="flex h-4 w-2 items-center justify-center border border-l-0 border-[#d5d5d5]"><Caret /></span>
          </div>
        </section>
        <section className={card + "h-[50px] pt-[1px]"}>
          <Head>Draft References</Head>
          <div className="mt-[3px] flex items-center">
            <label htmlFor="method" className="w-[71px]">Draft Method</label>
            <div className="relative flex-1">
              <select id="method" className={sel + "pl-0.5"}><option>Stationary Face</option></select>
              <Caret className="pointer-events-none absolute right-0.5 top-[5px] text-black" />
            </div>
          </div>
          <div className="mt-px flex h-4 items-center">
            <GreenCheck /><span className="ml-px flex-1">Select Stationary Face (1)</span>
            <Box className="w-[13px]"><svg viewBox="0 0 10 10" className="size-2.5"><path d="M3 1h2v2H3z" fill={OR} /><path d="M1 8h1v1H1zM4 8h1v1H4zM8 8h1v1H8zM7 4h1v1H7z" fill="#333" /></svg></Box>
            <Box className="ml-0.5 h-4 w-4"><svg viewBox="0 0 14 12" className="h-[11px] w-[13px]"><path d="M3 1h8v4H3z" fill="#fff" stroke="#999" /><path d="M2.500 5h9l1.500 5H1z" fill="#ccc" stroke="#777" /><path d="M1 4h12" stroke="#e4553a" strokeWidth="1.500" /></svg></Box>
          </div>
        </section>
        <section className={card + "h-[94px]"}>
          <Head>Faces to Draft</Head>
          <div className="mt-1 flex h-[17px] items-center bg-[#f6c7a4]">
            <svg viewBox="0 0 10 10" className="mr-0.5 size-2" stroke="#e8252b" strokeWidth="1.500"><path d="M5 0v10M0 5h10M1.500 1.500l7 7M8.500 1.500l-7 7" /></svg>
            <span className="flex-1">Select Face (0)</span>
            <span className="flex h-full w-[18px] items-center justify-center border-l border-[#fbe3cf] bg-[#f9c873]"><Cube className="size-3" left="#f3f3f3" /></span>
          </div>
          <div className="mt-[3px] flex h-[11px] items-center">
            <label htmlFor="angle" className="w-[71px]">Angle 1</label>
            <div className="flex h-[11px] min-w-0 flex-1 items-center gap-1 border border-[#74828e] bg-[#eef5fb] pl-[3px] pr-0.5">
              <span className="flex bg-[#0a6fd0]"><input id="angle" defaultValue="2.1" className="h-[9px] w-[10px] bg-transparent text-[7px] leading-[9px] text-white outline-none" /></span>
              <span className="flex-1 pl-[12px] text-center">°</span><Caret className="text-black" />
            </div>
          </div>
          <div className="flex h-[14px] items-center text-[#b9b9b9]">
            <span className="flex-1">Add New Set</span><Box className="w-[13px]"><CirclePlus className="size-2.5" strokeWidth={1.5} /></Box>
          </div>
          <button className="mt-0.5 flex h-3 w-full items-center gap-1 border border-[#ddd] pl-1 text-[#157a8c]"><Tri />List</button>
          <button disabled className="mt-px flex h-[14px] w-full items-center justify-center border border-[#d5d5d5] text-[#b4b4b4]">Recommend Draft Angle</button>
        </section>
        <section className={card + "h-[12px]"}><Head open={false}>Settings</Head></section>
      </div>
      <div className="mx-1 mt-px flex h-[14px] items-center">
        <label className="flex flex-1 items-center gap-0.5">
          <input type="checkbox" defaultChecked className="size-[7px] accent-[#0a63ad]" />Preview
        </label>
        Show Result<Box className="ml-px w-[13px]"><Search className="size-2.5 -scale-x-100 text-[#bbb]" strokeWidth={1.5} /></Box>
      </div>
      <button aria-label="Collapse" className="mx-[3px] flex h-[10px] items-center justify-center border-b border-[#d8d8d8] text-black"><Caret className="rotate-180" /></button>
      <footer className="flex justify-end gap-[3px] px-[7px] pb-1 pt-[3px]">
        <button disabled className="h-[13px] w-[35px] border border-[#ccc] text-[#b9b9b9]">OK</button>
        <button disabled className="h-[13px] w-[35px] border border-[#ccc] text-[#b9b9b9]">Apply</button>
        <button className="h-[13px] w-[35px] border border-[#2a7f9e] bg-[#f6fafc] text-[#157a8c]">Cancel</button>
      </footer>
    </div>
  );
}

export default function App() {
  return (
    <div className="relative flex h-screen flex-col overflow-hidden bg-[#f3f3f1] font-['Lato','Open_Sans',sans-serif] text-[7px] leading-[9px]">
      <div className="h-[22px] shrink-0 bg-black" />
      <header className="bg-[#21243b]"><TitleBar /><MenuTabs /></header>
      <Ribbon />
      <Toolbar />
      <main className="flex min-h-0 flex-1">
        <LeftRail />
        <PartNavigator />
        <div className="flex min-w-0 flex-1 flex-col"><DocTabs /><Viewport /></div>
        <RightRail />
      </main>
      <div className="pointer-events-none absolute inset-x-0 bottom-0 h-16 bg-linear-to-b from-transparent to-black/25" />
      <DraftDialog />
      <div role="tooltip" className="absolute left-[218px] top-[189px] flex h-[17px] items-center whitespace-nowrap border border-[#8b7fd0] bg-white px-[3px] text-[#2b2b45] shadow">Select faces for new set</div>
      <svg viewBox="0 0 12 18" className="pointer-events-none absolute left-[98px] top-[193px] h-3 w-2"><path d="M1 1v13l3-3 2.500 6 2.500-1-2.500-6H11z" fill="#fff" stroke="#222" /></svg>
    </div>
  );
}
